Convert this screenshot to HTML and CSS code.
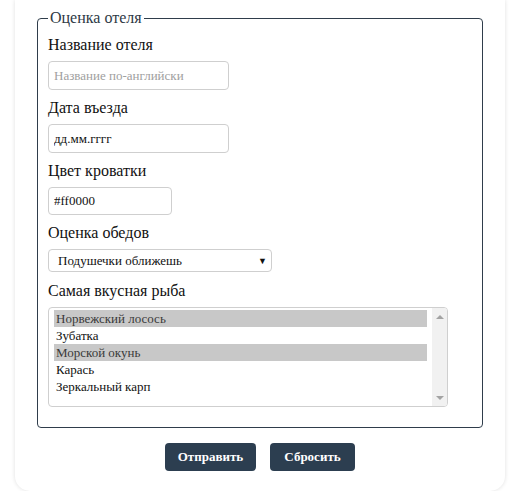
FILE: index.html
```html
<!DOCTYPE html>
<html lang="ru">
<head>
<meta charset="utf-8">
<title>Оценка отеля</title>
<link rel="stylesheet" href="styles.css">
</head>
<body>
<div class="card">
  <form class="form">
    <fieldset class="box">
      <legend class="legend">Оценка отеля</legend>
      <label class="label">Название отеля</label>
      <input class="field field-wide" type="text" placeholder="Название по-английски">
      <label class="label">Дата въезда</label>
      <input class="field field-wide" type="text" value="дд.мм.гггг">
      <label class="label">Цвет кроватки</label>
      <input class="field field-short" type="text" value="#ff0000">
      <label class="label">Оценка обедов</label>
      <div class="select">
        <span class="select-text">Подушечки оближешь</span>
        <span class="select-arrow">▼</span>
      </div>
      <label class="label">Самая вкусная рыба</label>
      <div class="listbox">
        <ul class="options">
          <li class="option selected">Норвежский лосось</li>
          <li class="option">Зубатка</li>
          <li class="option selected">Морской окунь</li>
          <li class="option">Карась</li>
          <li class="option">Зеркальный карп</li>
        </ul>
        <div class="scrollbar">
          <span class="arrow arrow-up"></span>
          <span class="arrow arrow-down"></span>
        </div>
      </div>
    </fieldset>
    <div class="actions">
      <button class="btn btn-submit" type="button">Отправить</button>
      <button class="btn btn-reset" type="button">Сбросить</button>
    </div>
  </form>
</div>
</body>
</html>
```
FILE: styles.css
```css
html, body {
  margin: 0;
  padding: 0;
  background: #ffffff;
}
body {
  font-family: "Liberation Serif", "Times New Roman", serif;
  color: #1e1e1e;
}
.card {
  margin-left: 15px;
  width: 490px;
  box-sizing: border-box;
  padding: 9px 22px 20px 22px;
  background: #fff;
  border-radius: 0 0 15px 15px;
  box-shadow: 0 0 4px rgba(0, 0, 0, 0.13);
}
.form {
  margin: 0;
}
.box {
  margin: 0;
  padding: 9px 10px 20px 10px;
  border: 1px solid #2f3d4b;
  border-radius: 4px;
  display: flex;
  flex-direction: column;
  align-items: flex-start;
}
.legend {
  padding: 0 2px;
  font-size: 16px;
  line-height: 18px;
  color: #2e3945;
}
.label {
  display: block;
  font-size: 16px;
  line-height: 18px;
  margin-bottom: 7px;
  color: #111;
}
.field {
  box-sizing: border-box;
  height: 29px;
  border: 1px solid #cfcfcf;
  border-radius: 4px;
  padding: 0 5px;
  font-family: "Liberation Serif", "Times New Roman", serif;
  font-size: 13px;
  color: #111;
  margin: 0 0 9px 0;
  background: #fff;
}
.field::placeholder {
  color: #a0a0a0;
}
.field-wide {
  width: 181px;
}
.field-short {
  width: 124px;
  height: 28px;
}
.select {
  box-sizing: border-box;
  width: 224px;
  height: 23px;
  border: 1px solid #cfcfcf;
  border-radius: 4px;
  display: flex;
  align-items: center;
  justify-content: space-between;
  padding: 0 4px 0 9px;
  font-size: 13px;
  margin-bottom: 10px;
}
.select-text {
  color: #111;
}
.select-arrow {
  font-size: 9px;
  color: #111;
}
.listbox {
  box-sizing: border-box;
  width: 400px;
  height: 100px;
  border: 1px solid #cfcfcf;
  border-radius: 4px;
  display: flex;
  justify-content: space-between;
  overflow: hidden;
}
.options {
  list-style: none;
  margin: 0;
  padding: 2px 0 0 5px;
  flex: 1;
}
.option {
  height: 17px;
  line-height: 17px;
  font-size: 13px;
  padding-left: 2px;
  margin-right: 5px;
  color: #111;
}
.option.selected {
  background: #c8c8c8;
  color: #3a3a3a;
}
.scrollbar {
  width: 15px;
  background: #f1f1f1;
  position: relative;
}
.arrow {
  position: absolute;
  left: 4px;
  width: 0;
  height: 0;
  border-left: 4px solid transparent;
  border-right: 4px solid transparent;
}
.arrow-up {
  top: 7px;
  border-bottom: 4px solid #a3a3a3;
}
.arrow-down {
  bottom: 6px;
  border-top: 4px solid #a3a3a3;
}
.actions {
  display: flex;
  justify-content: center;
  gap: 14px;
  margin-top: 15px;
}
.btn {
  height: 28px;
  padding: 0;
  border: none;
  border-radius: 4px;
  background: #2c3e50;
  color: #fff;
  font-family: "Liberation Serif", "Times New Roman", serif;
  font-weight: bold;
  font-size: 13px;
}
.btn-submit {
  width: 91px;
}
.btn-reset {
  width: 85px;
}
```
